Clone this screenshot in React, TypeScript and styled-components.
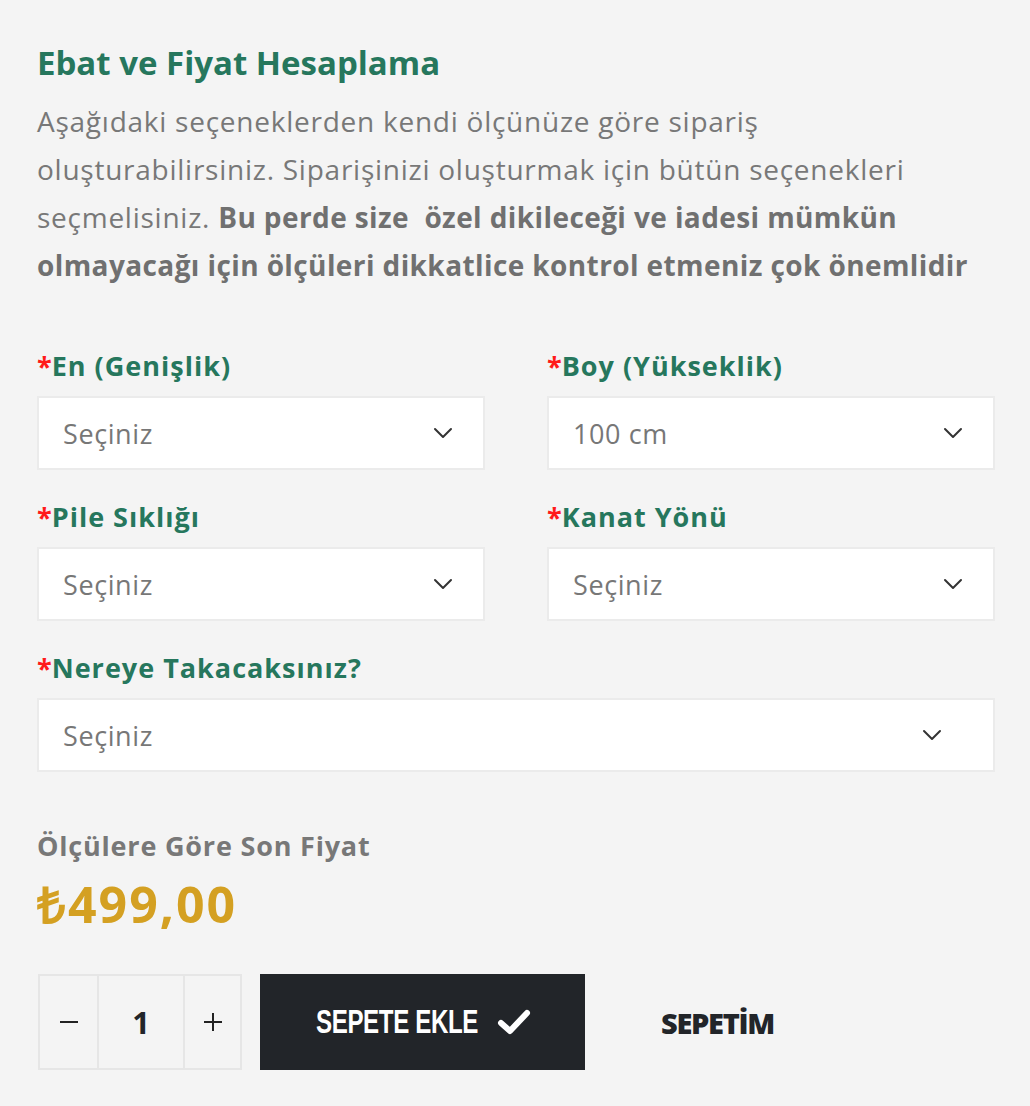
import styled, { createGlobalStyle } from "styled-components";

const GlobalStyle = createGlobalStyle`
  body {
    margin: 0;
    padding: 0;
    background: #f4f4f4;
    font-family: "Open Sans", "Liberation Sans", sans-serif;
  }
  * {
    box-sizing: border-box;
  }
`;

const Page = styled.div`
  width: 1030px;
  min-height: 1106px;
  padding: 43px 35px 0 37px;
`;

const Title = styled.h2`
  margin: 0;
  font-size: 33px;
  line-height: 40px;
  font-weight: 700;
  color: #26775d;
`;

const Intro = styled.p`
  margin: 14px 0 0;
  font-size: 28px;
  line-height: 48px;
  color: #787878;
  letter-spacing: 0.75px;

  strong {
    font-weight: 700;
    color: #707070;
    letter-spacing: 0.4px;
  }
`;

const Line = styled.span`
  display: block;
  white-space: nowrap;
`;

const FieldGrid = styled.div`
  display: grid;
  grid-template-columns: 1fr 1fr;
  column-gap: 62px;
  row-gap: 30px;
  margin-top: 60px;
`;

const Field = styled.div<{ $wide?: boolean }>`
  display: flex;
  flex-direction: column;
  gap: 13px;
  grid-column: ${(p) => (p.$wide ? "1 / -1" : "auto")};
`;

const Label = styled.label`
  font-size: 27px;
  line-height: 34px;
  font-weight: 700;
  color: #26775d;
  letter-spacing: 1px;
`;

const Star = styled.span`
  color: #ff1a1a;
  letter-spacing: 0;
`;

const SelectBox = styled.div<{ $wide?: boolean }>`
  height: 74px;
  background: #fff;
  border: 2px solid #ebebeb;
  display: flex;
  align-items: center;
  justify-content: space-between;
  padding: 0 ${(p) => (p.$wide ? "51px" : "30px")} 0 24px;
  font-size: 27px;
  letter-spacing: 0.6px;
  color: #777;
`;

const PriceLabel = styled.div`
  margin-top: 57px;
  font-size: 27px;
  line-height: 34px;
  font-weight: 700;
  color: #787878;
  letter-spacing: 0.8px;
`;

const Price = styled.div`
  margin-top: 13px;
  font-size: 50px;
  line-height: 56px;
  font-weight: 700;
  color: #d4a022;
  letter-spacing: 2px;
`;

const Actions = styled.div`
  display: flex;
  align-items: center;
  margin-top: 42px;
`;

const Qty = styled.div`
  display: flex;
  height: 96px;
  margin-left: 1px;
  border: 2px solid #e6e6e6;
`;

const QtyButton = styled.div<{ $w: number }>`
  width: ${(p) => p.$w}px;
  display: flex;
  align-items: center;
  justify-content: center;
  font-size: 31px;
  font-weight: 700;
  color: #222529;
  & + & {
    border-left: 2px solid #e6e6e6;
  }
`;

const AddButton = styled.button`
  margin-left: 18px;
  width: 325px;
  height: 96px;
  border: none;
  background: #222529;
  color: #fff;
  display: flex;
  align-items: center;
  justify-content: center;
  gap: 20px;
  padding: 0 0 0 2px;
`;

const AddText = styled.span`
  display: inline-block;
  width: 161px;
  font-family: "Liberation Sans", sans-serif;
  font-size: 33px;
  font-weight: 700;
  letter-spacing: -0.5px;
  white-space: nowrap;
  transform: scaleX(0.73);
  transform-origin: left center;
`;

const CartLink = styled.a`
  margin-left: 76px;
  font-size: 29px;
  font-weight: 800;
  color: #222529;
  letter-spacing: -1.3px;
  text-decoration: none;
`;

const Chevron = () => (
  <svg width="20" height="12" viewBox="0 0 20 12" fill="none">
    <path d="M2 2l8 8 8-8" stroke="#333" strokeWidth="2" strokeLinecap="round" strokeLinejoin="round" />
  </svg>
);

const Check = () => (
  <svg width="34" height="28" viewBox="0 0 34 28" fill="none">
    <path d="M4 15l9 8L30 5" stroke="#fff" strokeWidth="6" strokeLinecap="round" strokeLinejoin="round" />
  </svg>
);

const Minus = () => (
  <svg width="20" height="20" viewBox="0 0 20 20">
    <path d="M1 10h18" stroke="#222" strokeWidth="2" />
  </svg>
);

const Plus = () => (
  <svg width="20" height="20" viewBox="0 0 20 20">
    <path d="M1 10h18M10 1v18" stroke="#222" strokeWidth="2" />
  </svg>
);

const fields = [
  { label: "En (Genişlik)", value: "Seçiniz" },
  { label: "Boy (Yükseklik)", value: "100 cm" },
  { label: "Pile Sıklığı", value: "Seçiniz" },
  { label: "Kanat Yönü", value: "Seçiniz" },
  { label: "Nereye Takacaksınız?", value: "Seçiniz", wide: true },
];

export default function App() {
  return (
    <Page>
      <GlobalStyle />
      <Title>Ebat ve Fiyat Hesaplama</Title>
      <Intro>
        <Line>Aşağıdaki seçeneklerden kendi ölçünüze göre sipariş</Line>
        <Line>oluşturabilirsiniz. Siparişinizi oluşturmak için bütün seçenekleri</Line>
        <Line>
          seçmelisiniz. <strong>Bu perde size&nbsp; özel dikileceği ve iadesi mümkün</strong>
        </Line>
        <Line>
          <strong>olmayacağı için ölçüleri dikkatlice kontrol etmeniz çok önemlidir</strong>
        </Line>
      </Intro>
      <FieldGrid>
        {fields.map((f) => (
          <Field key={f.label} $wide={f.wide}>
            <Label>
              <Star>*</Star>
              {f.label}
            </Label>
            <SelectBox $wide={f.wide}>
              <span>{f.value}</span>
              <Chevron />
            </SelectBox>
          </Field>
        ))}
      </FieldGrid>
      <PriceLabel>Ölçülere Göre Son Fiyat</PriceLabel>
      <Price>₺499,00</Price>
      <Actions>
        <Qty>
          <QtyButton $w={57}>
            <Minus />
          </QtyButton>
          <QtyButton $w={86}>1</QtyButton>
          <QtyButton $w={57}>
            <Plus />
          </QtyButton>
        </Qty>
        <AddButton>
          <AddText>SEPETE EKLE</AddText>
          <Check />
        </AddButton>
        <CartLink href="#">SEPETİM</CartLink>
      </Actions>
    </Page>
  );
}
